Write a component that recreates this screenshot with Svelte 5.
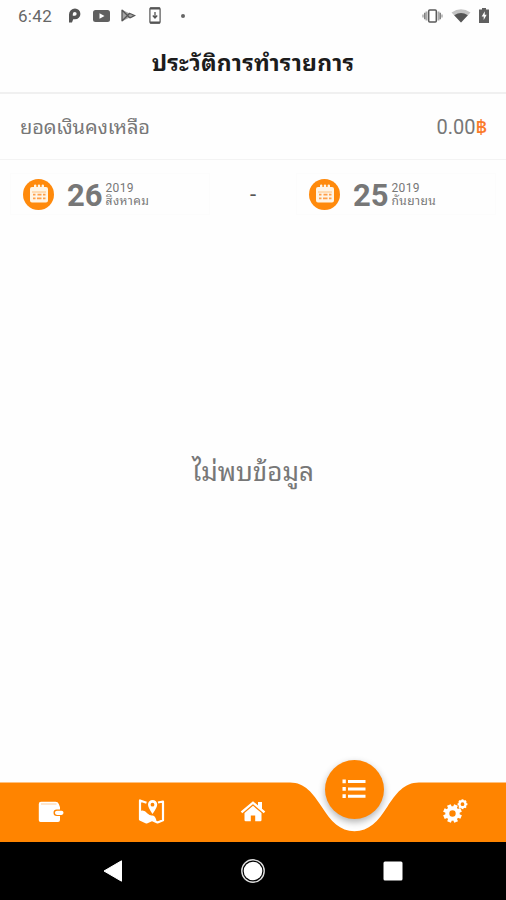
<script lang="ts">
	const balance = '0.00'

	const range = [
		{ id: 'from', day: '26', year: '2019', month: 'สิงหาคม' },
		{ id: 'to', day: '25', year: '2019', month: 'กันยายน' }
	]

	const tabs = ['wallet', 'map', 'home', 'list', 'settings']

	let active = $state('list')

	const teeth = [0, 45, 90, 135, 180, 225, 270, 315]
</script>

<div class="screen">
	<div class="status">
		<span class="time">6:42</span>
		<svg class="parking" width="13" height="15" viewBox="0 0 13 15">
			<path
				d="M1 14.500V6.500a6 6 0 0 1 6-6a5.300 5.300 0 0 1 0 10.800H5.200L4 14.500ZM6.800 4a2 2 0 0 0-2 2v1.700H6.800a1.850 1.850 0 0 0 0-3.700Z"
				fill="#555"
				fill-rule="evenodd"
			/>
		</svg>
		<svg class="video" width="17" height="12" viewBox="0 0 17 12">
			<rect width="17" height="12" rx="2.500" fill="#606060" />
			<path d="M6.500 3.200v5.600L11.500 6Z" fill="#fff" />
		</svg>
		<svg class="play" width="15" height="13" viewBox="0 0 15 13">
			<path d="M1 0.800v11.400L13 6.500Z" fill="#a5a5a5" />
			<path d="M1 0.800v11.400M1 1l8 8M1 12l8-8M9 4.500l4.500 2L9 8.800" fill="none" stroke="#555" stroke-width="1.300" />
		</svg>
		<svg class="download" width="12" height="17" viewBox="0 0 12 17">
			<rect x="0.900" y="0.900" width="10.200" height="15.200" rx="1" fill="#fff" stroke="#555" stroke-width="1.200" />
			<path d="M1 1.500h10M1 15.500h10" stroke="#555" stroke-width="2" />
			<path d="M6 5v5.500M3.800 8.500L6 11l2.200-2.500" fill="none" stroke="#555" stroke-width="1.300" />
		</svg>
		<span class="dot"></span>

		<svg class="vibrate" width="21" height="14" viewBox="0 0 21 14">
			<rect x="6.700" y="0.900" width="7.600" height="12.200" rx="1" fill="#fff" stroke="#5a5a5a" stroke-width="1.500" />
			<path d="M4.500 2.500v9M16.500 2.500v9" stroke="#aaa" stroke-width="2" />
			<path d="M2.800 3.800v6.400M18.200 3.800v6.400" stroke="#777" stroke-width="1.400" />
			<path d="M1 5.500v3M20 5.500v3" stroke="#999" stroke-width="1.200" />
		</svg>
		<svg class="wifi" width="20" height="14" viewBox="0 0 20 14">
			<path d="M0.500 3.500Q10-3 19.500 3.500L10 13.500Z" fill="#c4c4c4" />
			<path d="M3.200 6.200Q10 1.800 16.800 6.200L10 13.500Z" fill="#555" />
		</svg>
		<svg class="battery" width="10" height="15" viewBox="0 0 10 15">
			<path d="M3 0h4v1.500h3V15H0V1.500h3Z" fill="#606060" />
			<path d="M5.800 3.200L2.700 8.400h2v3.600l3-5.200h-2Z" fill="#fff" />
		</svg>
	</div>

	<header class="title">ประวัติการทำรายการ</header>

	<div class="balance">
		<span class="label">ยอดเงินคงเหลือ</span>
		<span class="amount">{balance}<b>฿</b></span>
	</div>

	<div class="range">
		{#each range as date, i (date.id)}
			{#if i > 0}
				<span class="dash">-</span>
			{/if}
			<div class="date">
				<span class="badge">
					<svg width="20" height="20" viewBox="0 0 20 20">
						<path
							d="M3 3h2V1.600a1 1 0 0 1 2.400 0V3h1.400V1.600a1 1 0 0 1 2.400 0V3h1.400V1.600a1 1 0 0 1 2.400 0V3H17a2 2 0 0 1 2 2v11.500a2 2 0 0 1-2 2H3a2 2 0 0 1-2-2V5a2 2 0 0 1 2-2Z"
							fill="#fff5e6"
						/>
						<path d="M3 8h14" stroke="#ffb566" stroke-width="0.800" />
						<path d="M4 10.700h2.500M8.500 10.700h4M14 10.700h2.500M4 14.300h2.500M8 14.300h4.500M14 14.300h2.500" stroke="#ffa04a" stroke-width="1.700" />
					</svg>
				</span>
				<span class="day">{date.day}</span>
				<span class="rest">
					<span class="year">{date.year}</span>
					<span class="month">{date.month}</span>
				</span>
			</div>
		{/each}
	</div>

	<main class="empty">ไม่พบข้อมูล</main>

	<nav class="tabs">
		<svg class="shape" width="506" height="60" viewBox="0 0 506 60">
			<path
				d="M0 0.500H290C305 0.500 313 11.500 321.500 24.500C331 39.500 340 49.200 354.500 49.200C369 49.200 378 39.500 387.500 24.500C396 11.500 404 0.500 419 0.500H506V60H0Z"
				fill="#ff8400"
			/>
		</svg>
		{#each tabs as tab (tab)}
			<button class="tab" class:active={active === tab} aria-label={tab} onclick={() => (active = tab)}>
				{#if tab === 'wallet'}
					<svg width="26" height="22" viewBox="0 0 26 22">
						<path d="M3 0.800H17.500Q20 0.800 20.800 3L22 6.200V8.500H18.800a3.300 3.300 0 0 0 0 6.600H22V19a2 2 0 0 1-2 2H2.500a1.700 1.700 0 0 1-1.700-1.700V3Q0.800 0.800 3 0.800Z" fill="#fff" />
						<path d="M3 3h15.500" stroke="#ffc890" stroke-width="0.900" />
						<path d="M19 9.700h4.500q2 0 2 2.100t-2 2.100H19a2.100 2.100 0 0 1 0-4.200Z" fill="#fff" />
					</svg>
				{:else if tab === 'map'}
					<svg width="27" height="25" viewBox="0 0 27 25">
						<path
							d="M8.500 3.700L2 1.500v19l6.500 3l5.500-2.500l5.500 2.500l5.500-2.200V2.500l-5 1"
							fill="none"
							stroke="#fff"
							stroke-width="2.200"
							stroke-linejoin="round"
						/>
						<path d="M2 12Q6 10 9.500 14.500Q12 17 14.500 16.500Q18 17 18.500 23L14 20.500L8.500 23.500L2 20.500Z" fill="#fff" />
						<path d="M14.500 15Q10 8.500 10 5.500a4.600 4.600 0 0 1 9.200 0Q19.200 8.500 14.500 15ZM14.500 3.800a1.900 1.900 0 1 0 0 3.800a1.900 1.900 0 0 0 0-3.800Z" fill="#fff" fill-rule="evenodd" />
					</svg>
				{:else if tab === 'home'}
					<svg width="26" height="21" viewBox="0 0 26 21">
						<path d="M1.500 11.300L13 1.700L24.500 11.300" fill="none" stroke="#fff" stroke-width="2.400" />
						<path d="M18 1H22v7.500L18 5.500Z" fill="#fff" />
						<path d="M13 4.800L21.500 12V19a1.200 1.200 0 0 1-1.200 1.200H15.200V14.500h-4.400v5.700H5.700A1.200 1.200 0 0 1 4.500 19V12Z" fill="#fff" />
					</svg>
				{:else if tab === 'list'}
					<span class="bubble">
						<svg width="24" height="20" viewBox="0 0 24 20">
							<path d="M0.500 2.400h3.300M0.500 9.900h3.300M0.500 17.200h3.300" stroke="#fff" stroke-width="3.700" />
							<path d="M6 2.400h17.500M6 9.900h17.500M6 17.200h17.500" stroke="#fff" stroke-width="3" />
						</svg>
					</span>
				{:else}
					<svg width="26" height="25" viewBox="0 0 26 25">
						<g transform="translate(10.500 14.500)" fill="none" stroke="#fff">
							<circle r="5.200" stroke-width="4" />
							{#each teeth as angle (angle)}
								<path d="M0 -6V-9.300" stroke-width="4" transform="rotate({angle + 22})" />
							{/each}
						</g>
						<g transform="translate(20.500 5.200)" fill="none" stroke="#fff">
							<circle r="3" stroke-width="2.200" />
							{#each teeth as angle (angle)}
								<path d="M0 -3V-4.900" stroke-width="1.900" transform="rotate({angle})" />
							{/each}
						</g>
					</svg>
				{/if}
			</button>
		{/each}
	</nav>

	<div class="system">
		<svg width="20" height="22" viewBox="0 0 20 22">
			<path d="M18.500 0.800V21.200L1 11Z" fill="#fff" stroke="#fff" stroke-linejoin="round" />
		</svg>
		<svg width="26" height="26" viewBox="0 0 26 26">
			<circle cx="13" cy="13" r="11.200" fill="none" stroke="#ddd" stroke-width="1.400" />
			<circle cx="13" cy="13" r="9.300" fill="#fff" />
		</svg>
		<svg width="20" height="20" viewBox="0 0 20 20">
			<rect x="0.500" y="0.500" width="19" height="19" rx="1.500" fill="#fff" />
		</svg>
	</div>
</div>

<style>
	:global(body) {
		background: #fefefe;
	}

	.screen {
		display: flex;
		flex-direction: column;
		width: 506px;
		height: 900px;
		overflow: hidden;
		font-family: Roboto, 'Noto Sans Thai Looped', 'Noto Looped Thai', Loma, Waree, Garuda, sans-serif;
		color: #777;
		background: #fefefe;
	}

	.status {
		display: flex;
		align-items: center;
		height: 31px;
		padding: 0 17px 0 18px;
	}

	.time {
		width: 50px;
		font-size: 17px;
		letter-spacing: 0.3px;
		color: #666;
	}

	.video {
		margin-left: 12px;
	}

	.play {
		margin-left: 11px;
	}

	.download {
		margin-left: 13px;
	}

	.dot {
		width: 4px;
		height: 4px;
		margin-left: 20px;
		border-radius: 50%;
		background: #666;
	}

	.vibrate {
		margin-left: auto;
	}

	.wifi {
		margin-left: 8px;
	}

	.battery {
		margin-left: 8px;
	}

	.title {
		display: flex;
		align-items: center;
		justify-content: center;
		height: 58px;
		padding-bottom: 3px;
		font-size: 23px;
		font-weight: 700;
		letter-spacing: 0.3px;
		color: #1c1c1c;
		border-bottom: 2px solid #f0f0f0;
	}

	.balance {
		display: flex;
		align-items: center;
		justify-content: space-between;
		height: 62px;
		padding: 0 19px 3px 20px;
		font-size: 20px;
		border-bottom: 1px solid #f3f3f3;
		& b {
			font-weight: 500;
			color: #fa7a2a;
		}
	}

	.label {
		letter-spacing: -0.15px;
	}

	.range {
		display: flex;
		align-items: center;
		height: 44px;
		margin-top: 12px;
		padding: 0 10px;
	}

	.date {
		display: flex;
		align-items: center;
		width: 200px;
		height: 42px;
		box-sizing: border-box;
		padding-left: 12px;
		border: 1px solid #fcfcfc;
	}

	.dash {
		flex: 1;
		text-align: center;
		font-size: 22px;
		color: #555;
	}

	.badge {
		display: flex;
		align-items: center;
		justify-content: center;
		width: 31px;
		height: 31px;
		border-radius: 50%;
		background: #ff8a0c;
	}

	.day {
		margin-left: 13px;
		padding-top: 3px;
		font-size: 31px;
		font-weight: 700;
		line-height: 39px;
	}

	.rest {
		display: flex;
		flex-direction: column;
		margin-left: 3px;
	}

	.year {
		font-size: 12px;
		letter-spacing: 0.3px;
		line-height: 13px;
	}

	.month {
		font-size: 12px;
		letter-spacing: 0.4px;
		line-height: 12px;
	}

	.empty {
		flex: 1;
		display: flex;
		align-items: center;
		justify-content: center;
		padding-bottom: 60px;
		font-size: 26px;
	}

	.tabs {
		position: relative;
		display: flex;
		height: 60px;
	}

	.shape {
		position: absolute;
		top: 0;
		left: 0;
	}

	.tab {
		position: relative;
		flex: 1;
		display: flex;
		align-items: center;
		justify-content: center;
		padding: 0 0 1px;
		border: 0;
		background: none;
		cursor: pointer;
	}

	.bubble {
		display: flex;
		align-items: center;
		justify-content: center;
		width: 59px;
		height: 59px;
		border-radius: 50%;
		background: #ff8400;
	}

	.active .bubble {
		margin-bottom: 45px;
		box-shadow: 0 3px 7px rgba(0, 0, 0, 0.3);
	}

	.system {
		display: grid;
		grid-template-columns: repeat(3, 140px);
		align-items: center;
		justify-content: center;
		justify-items: center;
		height: 58px;
		background: #000;
	}
</style>
